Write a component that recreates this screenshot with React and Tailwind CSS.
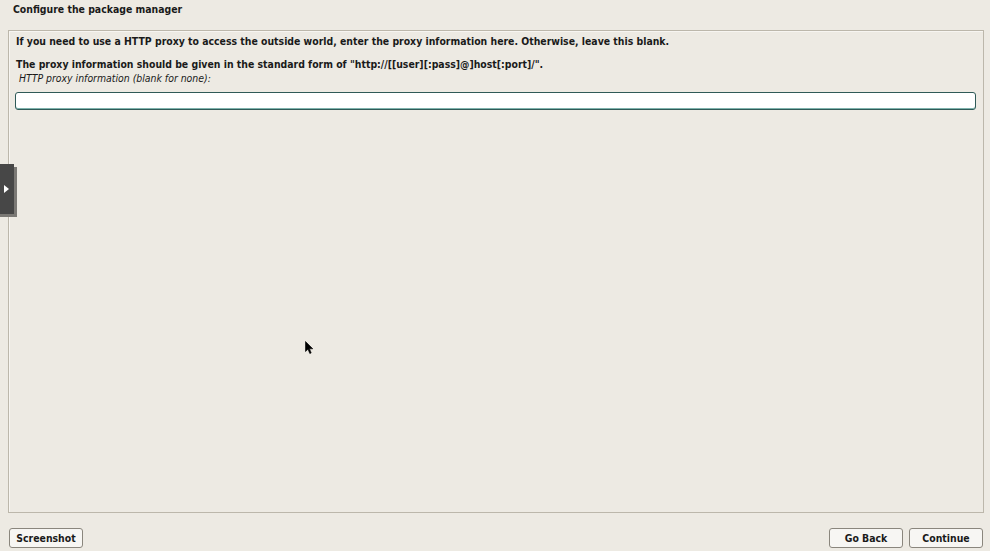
export default function App() {
  const font = { fontFamily: '"DejaVu Sans Condensed", "DejaVu Sans", sans-serif' };
  return (
    <div className="w-[990px] h-[551px] bg-[#edeae3] relative overflow-hidden text-[#1a1a1a]" style={font}>
      <div className="flex flex-col h-full">
        <div className="h-[30px] pl-[13px] pt-[2px] text-[10.4px] font-bold leading-[14px]">Configure the package manager</div>
        <div className="ml-[8px] mr-[6px] h-[483px] border border-[#bcb7ab] shadow-[inset_1px_1px_0_#f7f5f1] px-[6px] pt-[3px]">
          <div className="text-[10.4px] font-bold leading-[14px] pl-[1px]">
            If you need to use a HTTP proxy to access the outside world, enter the proxy information here. Otherwise, leave this blank.
          </div>
          <div className="text-[10.4px] font-bold leading-[14px] pl-[1px] mt-[9px]">
            The proxy information should be given in the standard form of "http://[[user][:pass]@]host[:port]/".
          </div>
          <div className="text-[10.4px] italic leading-[13px] pl-[4px] mt-[1px]">HTTP proxy information (blank for none):</div>
          <div className="mt-[7px] mr-[1px] h-[18px] bg-white border border-[#2f5a57] rounded-[3px] shadow-[inset_0_-1px_0_#7fb3ad]"></div>
        </div>
        <div className="flex justify-between items-start mt-[15px] pl-[9px] pr-[7px]">
          <button className="h-[20px] w-[74px] bg-[#f7f6f3] border border-[#8a867d] rounded-[3px] text-[10.4px] font-bold leading-none" style={font}>Screenshot</button>
          <div className="flex gap-[6px]">
            <button className="h-[20px] w-[74px] bg-[#f7f6f3] border border-[#8a867d] rounded-[3px] text-[10.4px] font-bold leading-none" style={font}>Go Back</button>
            <button className="h-[20px] w-[74px] bg-[#f7f6f3] border border-[#8a867d] rounded-[3px] text-[10.4px] font-bold leading-none" style={font}>Continue</button>
          </div>
        </div>
      </div>
      <div className="absolute left-0 top-[167px] w-[17px] h-[50px] bg-[#7b7975]"></div>
      <div className="absolute left-0 top-[164px] w-[14px] h-[50px] bg-[#474747] flex items-center justify-center">
        <svg width="6" height="8" viewBox="0 0 6 8"><path d="M0 0 L5 4 L0 8 Z" fill="#ffffff" /></svg>
      </div>
      <svg className="absolute left-[305px] top-[341px]" width="9" height="14" viewBox="0 0 9 14">
        <path d="M0.5 0.5 L0.5 10.5 L3 8.2 L4.8 12.5 L6.2 11.9 L4.5 7.8 L7.8 7.8 Z" fill="#000" stroke="#000" strokeWidth="0.6" />
      </svg>
    </div>
  );
}
